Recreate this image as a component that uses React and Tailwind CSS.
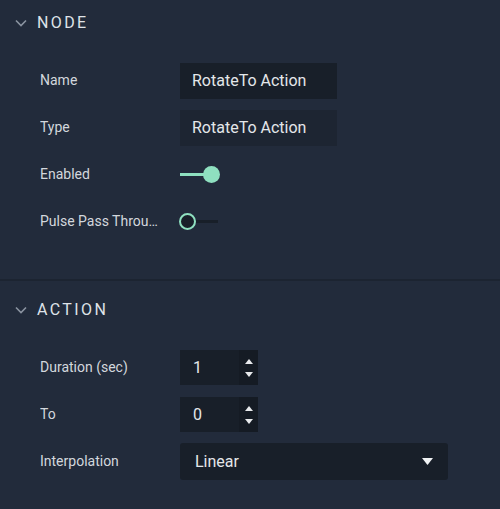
import React from 'react';

function Chevron() {
  return (
    <svg width="12" height="8" viewBox="0 0 12 8" className="text-[#8a93a0]">
      <path d="M1 1.5l5 5 5-5" fill="none" stroke="currentColor" strokeWidth="1.6" />
    </svg>
  );
}

function Header({ title }) {
  return (
    <div className="h-[46px] flex items-center pl-[15px]">
      <Chevron />
      <span className="ml-[10px] text-[16px] tracking-[2.4px] text-[#dfe3e8]">{title}</span>
    </div>
  );
}

function Row({ label, children }) {
  return (
    <div className="h-[47px] flex items-center pl-[40px]">
      <div className="w-[140px] pr-[22px] truncate text-[14px] text-[#d3d7dd]">{label}</div>
      {children}
    </div>
  );
}

function TextInput({ value, dim }) {
  return (
    <div
      className={
        'w-[157px] h-[36px] flex items-center pl-[12px] text-[16px] text-[#e4e7ea] ' +
        (dim ? 'bg-[#1d2532]' : 'bg-[#181f29]')
      }
    >
      {value}
    </div>
  );
}

function Toggle({ on }) {
  if (on) {
    return (
      <div className="flex items-center">
        <div className="w-[24px] h-[3px] bg-[#8fe0c0]" />
        <div className="w-[17px] h-[17px] rounded-full bg-[#8fe0c0] -ml-[1px]" />
      </div>
    );
  }
  return (
    <div className="flex items-center">
      <div className="w-[17px] h-[17px] rounded-full border-2 border-[#8fe0c0] bg-[#181f29] -ml-[1px]" />
      <div className="w-[22px] h-[3px] bg-[#181f29]" />
    </div>
  );
}

function NumberInput({ value }) {
  return (
    <div className="w-[78px] h-[35px] flex bg-[#181f29]">
      <div className="flex-1 flex items-center pl-[13px] text-[16px] text-[#e4e7ea]">{value}</div>
      <div className="w-[19px] flex flex-col items-center justify-center gap-[8px] bg-[#151b24]">
        <svg width="8" height="5" viewBox="0 0 8 5"><path d="M0 5L4 0L8 5Z" fill="#e8eaed" /></svg>
        <svg width="8" height="5" viewBox="0 0 8 5"><path d="M0 0L4 5L8 0Z" fill="#e8eaed" /></svg>
      </div>
    </div>
  );
}

export default function App() {
  return (
    <div className="w-[500px] h-[509px] bg-[#222b3b] overflow-hidden" style={{ fontFamily: 'Roboto, "Liberation Sans", sans-serif' }}>
      <div className="h-[279px]">
        <Header title="NODE" />
        <div className="mt-[11px]">
          <Row label="Name"><TextInput value="RotateTo Action" /></Row>
          <Row label="Type"><TextInput value="RotateTo Action" dim /></Row>
          <Row label="Enabled"><Toggle on /></Row>
          <Row label="Pulse Pass Through"><Toggle /></Row>
        </div>
      </div>
      <div className="h-[2px] bg-[#1c2431]" />
      <div className="pt-[6px]">
        <Header title="ACTION" />
        <div className="mt-[11px]">
          <Row label="Duration (sec)"><NumberInput value="1" /></Row>
          <Row label="To"><NumberInput value="0" /></Row>
          <Row label="Interpolation">
            <div className="w-[268px] h-[37px] rounded-[3px] bg-[#181f29] flex items-center justify-between pl-[15px] pr-[15px] text-[16px] text-[#e4e7ea]">
              <span>Linear</span>
              <svg width="11" height="7" viewBox="0 0 11 7"><path d="M0 0L5.5 7L11 0Z" fill="#f0f2f4" /></svg>
            </div>
          </Row>
        </div>
      </div>
    </div>
  );
}
